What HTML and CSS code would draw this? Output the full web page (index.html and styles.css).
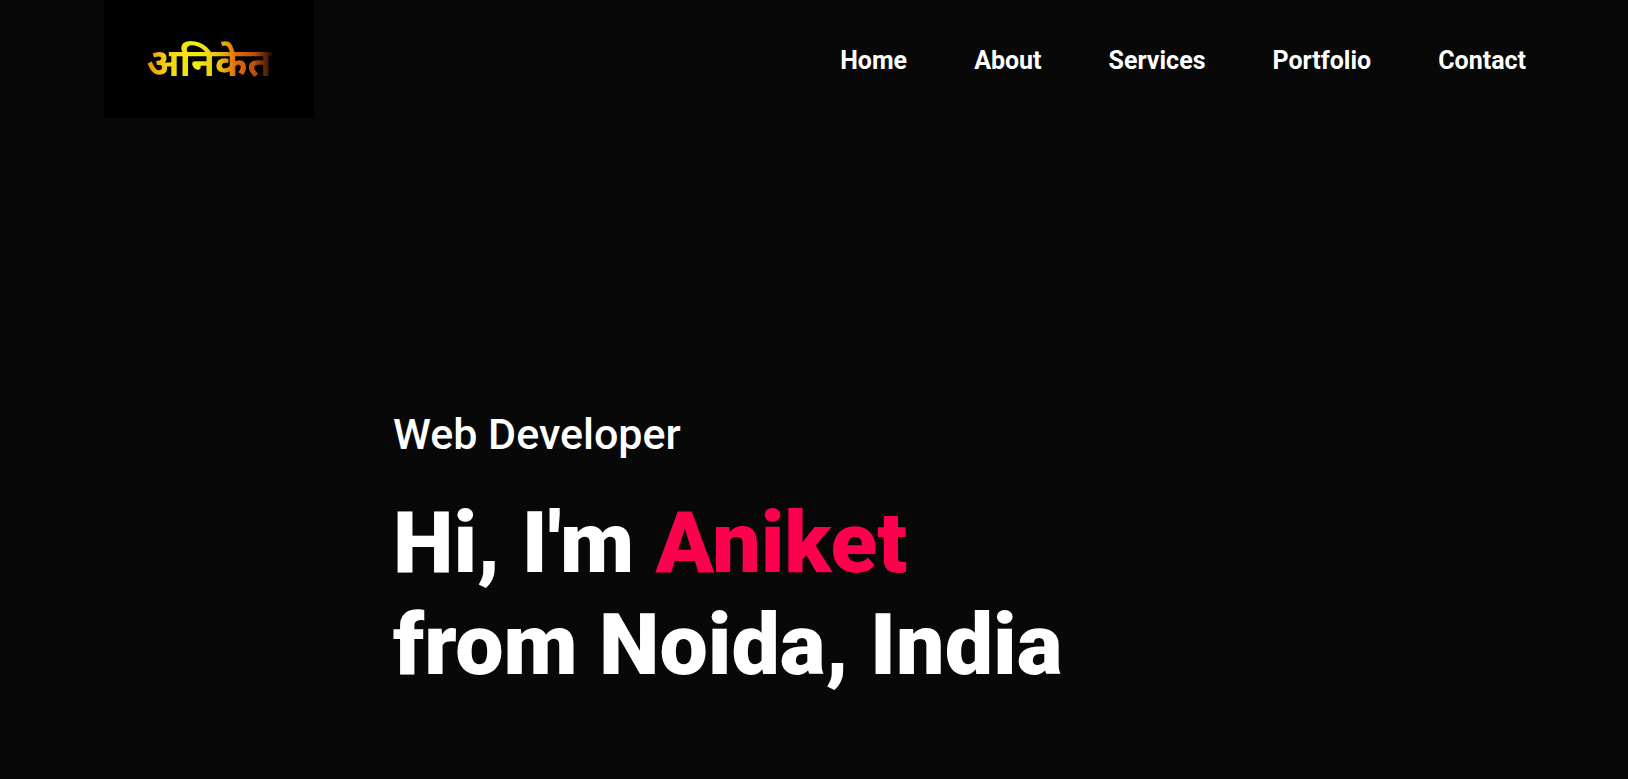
FILE: index.html
```html
<!DOCTYPE html>
<html lang="en">
<head>
<meta charset="utf-8">
<meta name="viewport" content="width=device-width, initial-scale=1">
<title>Aniket</title>
<link rel="stylesheet" href="styles.css">
</head>
<body>
<header class="header">
  <a class="logo" href="#home"><span class="logo-text" lang="hi">अनिकेत</span></a>
  <nav class="nav">
    <a href="#home">Home</a>
    <a href="#about">About</a>
    <a href="#services">Services</a>
    <a href="#portfolio">Portfolio</a>
    <a href="#contact">Contact</a>
  </nav>
</header>
<main class="hero" id="home">
  <p class="role">Web Developer</p>
  <h1 class="title">Hi, I'm <span class="name">Aniket</span><br>from Noida, India</h1>
</main>
</body>
</html>
```
FILE: styles.css
```css
* {
  box-sizing: border-box;
}
body {
  margin: 0;
  min-height: 100vh;
  background: #080808;
  color: #fff;
  font-family: Roboto, "Liberation Sans", sans-serif;
}
.header {
  display: flex;
  justify-content: space-between;
  align-items: center;
  padding: 0 102px 0 104px;
}
.logo {
  display: flex;
  align-items: center;
  justify-content: center;
  width: 210px;
  height: 118px;
  background: #000;
  text-decoration: none;
}
.logo-text {
  padding-top: 16px;
  font-family: "Noto Sans Devanagari", "Noto Sans", sans-serif;
  font-size: 39px;
  font-weight: 700;
  line-height: 56px;
  background: linear-gradient(90deg, #e88a10 0, #f5d015 16%, #f2ee10 40%, #e8c010 58%, #e06a08 72%, #b85010 86%, #200c00 100%);
  background-clip: text;
  -webkit-background-clip: text;
  color: transparent;
}
.nav {
  display: flex;
  gap: 67px;
  padding-top: 4px;
}
.nav a {
  color: #fff;
  font-size: 25px;
  font-weight: 700;
  line-height: 32px;
  text-decoration: none;
}
.hero {
  padding: 290px 104px 64px 393px;
}
.role {
  margin: 0;
  font-size: 43px;
  font-weight: 500;
  line-height: 52px;
}
.title {
  margin: 32px 0 0;
  font-size: 86px;
  font-weight: 900;
  line-height: 102px;
}
.name {
  color: #ff004f;
}
```
